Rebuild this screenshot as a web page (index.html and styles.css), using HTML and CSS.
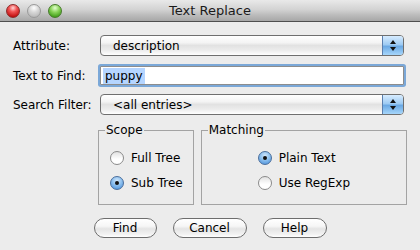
FILE: index.html
```html
<!DOCTYPE html>
<html lang="en">
<head>
  <meta charset="UTF-8" />
  <title>Text Replace</title>
  <link rel="stylesheet" href="styles.css">
</head>
<body>
  <div class="window">
    <div class="titlebar">
      <div class="lights">
        <span class="light red"></span>
        <span class="light gray"></span>
        <span class="light green"></span>
      </div>
      <div class="title">Text Replace</div>
    </div>

    <div class="content">
      <div class="row row-first">
        <label class="label">Attribute:</label>
        <div class="popup">
          <span class="popup-text">description</span>
          <span class="stepper"><span class="up"></span><span class="down"></span></span>
        </div>
      </div>
      <div class="row row-field">
        <label class="label">Text to Find:</label>
        <div class="field"><span class="sel">puppy</span></div>
      </div>
      <div class="row row-last">
        <label class="label">Search Filter:</label>
        <div class="popup">
          <span class="popup-text">&lt;all entries&gt;</span>
          <span class="stepper"><span class="up"></span><span class="down"></span></span>
        </div>
      </div>

      <div class="groups">
        <fieldset class="group scope">
          <legend>Scope</legend>
          <div class="options">
            <div class="radio"><span class="dot"></span>Full Tree</div>
            <div class="radio"><span class="dot on"></span>Sub Tree</div>
          </div>
        </fieldset>
        <fieldset class="group matching">
          <legend>Matching</legend>
          <div class="options">
            <div class="radio"><span class="dot on"></span>Plain Text</div>
            <div class="radio"><span class="dot"></span>Use RegExp</div>
          </div>
        </fieldset>
      </div>

      <div class="buttons">
        <button class="btn find">Find</button>
        <button class="btn cancel">Cancel</button>
        <button class="btn help">Help</button>
      </div>
    </div>
  </div>
</body>
</html>
```

FILE: styles.css
```css
body {
  margin: 0;
  font-family: "DejaVu Sans", sans-serif;
  font-size: 12px;
  color: #000;
  background: #ececec;
}

.window {
  width: 420px;
  height: 250px;
  background: #ececec;
  overflow: hidden;
}

/* title bar */
.titlebar {
  height: 21px;
  border-bottom: 1px solid #4f4f4f;
  background: linear-gradient(to bottom, #e9e9e9 0%, #d3d3d3 45%, #bdbdbd 70%, #a7a7a7 100%);
  display: flex;
  align-items: center;
  position: relative;
}

.lights {
  display: flex;
  gap: 7px;
  padding-left: 6px;
}

.light {
  width: 14px;
  height: 14px;
  border-radius: 50%;
  box-sizing: border-box;
}

.light.red {
  background: radial-gradient(circle at 50% 25%, #ffd6d6 0%, #f25656 35%, #c01010 80%, #a00000 100%);
  border: 1px solid #8c2a2a;
}

.light.gray {
  background: radial-gradient(circle at 50% 25%, #ffffff 0%, #d8d8d8 40%, #b4b4b4 90%);
  border: 1px solid #9a9a9a;
}

.light.green {
  background: radial-gradient(circle at 50% 25%, #e4ffd0 0%, #8ad45a 40%, #3c9a14 85%);
  border: 1px solid #467a2a;
}

.title {
  position: absolute;
  left: 0;
  right: 0;
  text-align: center;
  font-size: 13px;
  color: #1a1a1a;
  pointer-events: none;
}

/* form rows */
.content {
  padding: 0 13px;
}

.row {
  display: flex;
  align-items: center;
}

.row-first {
  margin-top: 13px;
  height: 21px;
}

.row-field {
  margin-top: 10px;
  height: 19px;
}

.row-last {
  margin-top: 9px;
  height: 21px;
}

.label {
  width: 87px;
  flex: none;
}

.popup {
  width: 304px;
  height: 21px;
  box-sizing: border-box;
  border: 1px solid #6f6f6f;
  border-radius: 4px;
  background: linear-gradient(to bottom, #ffffff 0%, #f4f4f4 35%, #e2e2e2 50%, #ececec 75%, #ffffff 100%);
  display: flex;
  align-items: center;
  justify-content: space-between;
  overflow: hidden;
}

.popup-text {
  padding-left: 12px;
}

.stepper {
  width: 20px;
  height: 100%;
  border-left: 1px solid #5b7fae;
  background: linear-gradient(to bottom, #d7ecff 0%, #9ecbf3 45%, #6ba9e4 55%, #a6d6fb 100%);
  display: flex;
  flex-direction: column;
  align-items: center;
  justify-content: center;
  gap: 3px;
}

.up, .down {
  width: 0;
  height: 0;
  border-left: 3px solid transparent;
  border-right: 3px solid transparent;
}

.up {
  border-bottom: 4px solid #111;
}

.down {
  border-top: 4px solid #111;
}

.field {
  width: 304px;
  height: 19px;
  box-sizing: border-box;
  background: #fff;
  border: 1px solid #8d8d8d;
  box-shadow: 0 0 0 2px #7ba8d8;
  border-radius: 1px;
  display: flex;
  align-items: center;
  padding-left: 2px;
}

.sel {
  background: #b5d5ff;
  padding: 1px 2px 1px 2px;
  line-height: 14px;
}

/* group boxes */
.groups {
  display: flex;
  gap: 7px;
  margin-top: 8px;
  padding-left: 85px;
}

.group {
  margin: 0;
  padding: 3px 0 0 0;
  border: 1px solid #a3a3a3;
  height: 82px;
  box-sizing: border-box;
}

.group legend {
  margin-left: 6px;
  padding: 0 1px;
  line-height: 14px;
}

.scope {
  width: 96px;
}

.scope .options {
  padding-left: 11px;
}

.matching {
  width: 207px;
}

.matching .options {
  padding-left: 56px;
}

.radio {
  display: flex;
  align-items: center;
  gap: 7px;
  height: 14px;
  margin-top: 11px;
}

.dot {
  width: 14px;
  height: 14px;
  box-sizing: border-box;
  border-radius: 50%;
  border: 1px solid #8a8a8a;
  background: linear-gradient(to bottom, #e2e2e2 0%, #ffffff 60%, #ffffff 100%);
  display: flex;
  align-items: center;
  justify-content: center;
}

.dot.on {
  border-color: #4a6e9c;
  background: radial-gradient(circle at 50% 30%, #cfe6fb 0%, #8ec0ee 45%, #5c9de0 80%, #86c2f5 100%);
}

.dot.on::after {
  content: "";
  width: 4px;
  height: 4px;
  border-radius: 50%;
  background: #111;
}

/* buttons */
.buttons {
  display: flex;
  justify-content: center;
  gap: 16px;
  margin-top: 13px;
}

.btn {
  font-family: inherit;
  font-size: 12px;
  height: 20px;
  box-sizing: border-box;
  border: 1px solid #6d6d6d;
  border-radius: 10px;
  background: linear-gradient(to bottom, #ffffff 0%, #f6f6f6 40%, #e4e4e4 55%, #f2f2f2 85%, #ffffff 100%);
  color: #000;
  padding: 0;
}

.find {
  width: 63px;
}

.cancel {
  width: 74px;
}

.help {
  width: 64px;
}
```
